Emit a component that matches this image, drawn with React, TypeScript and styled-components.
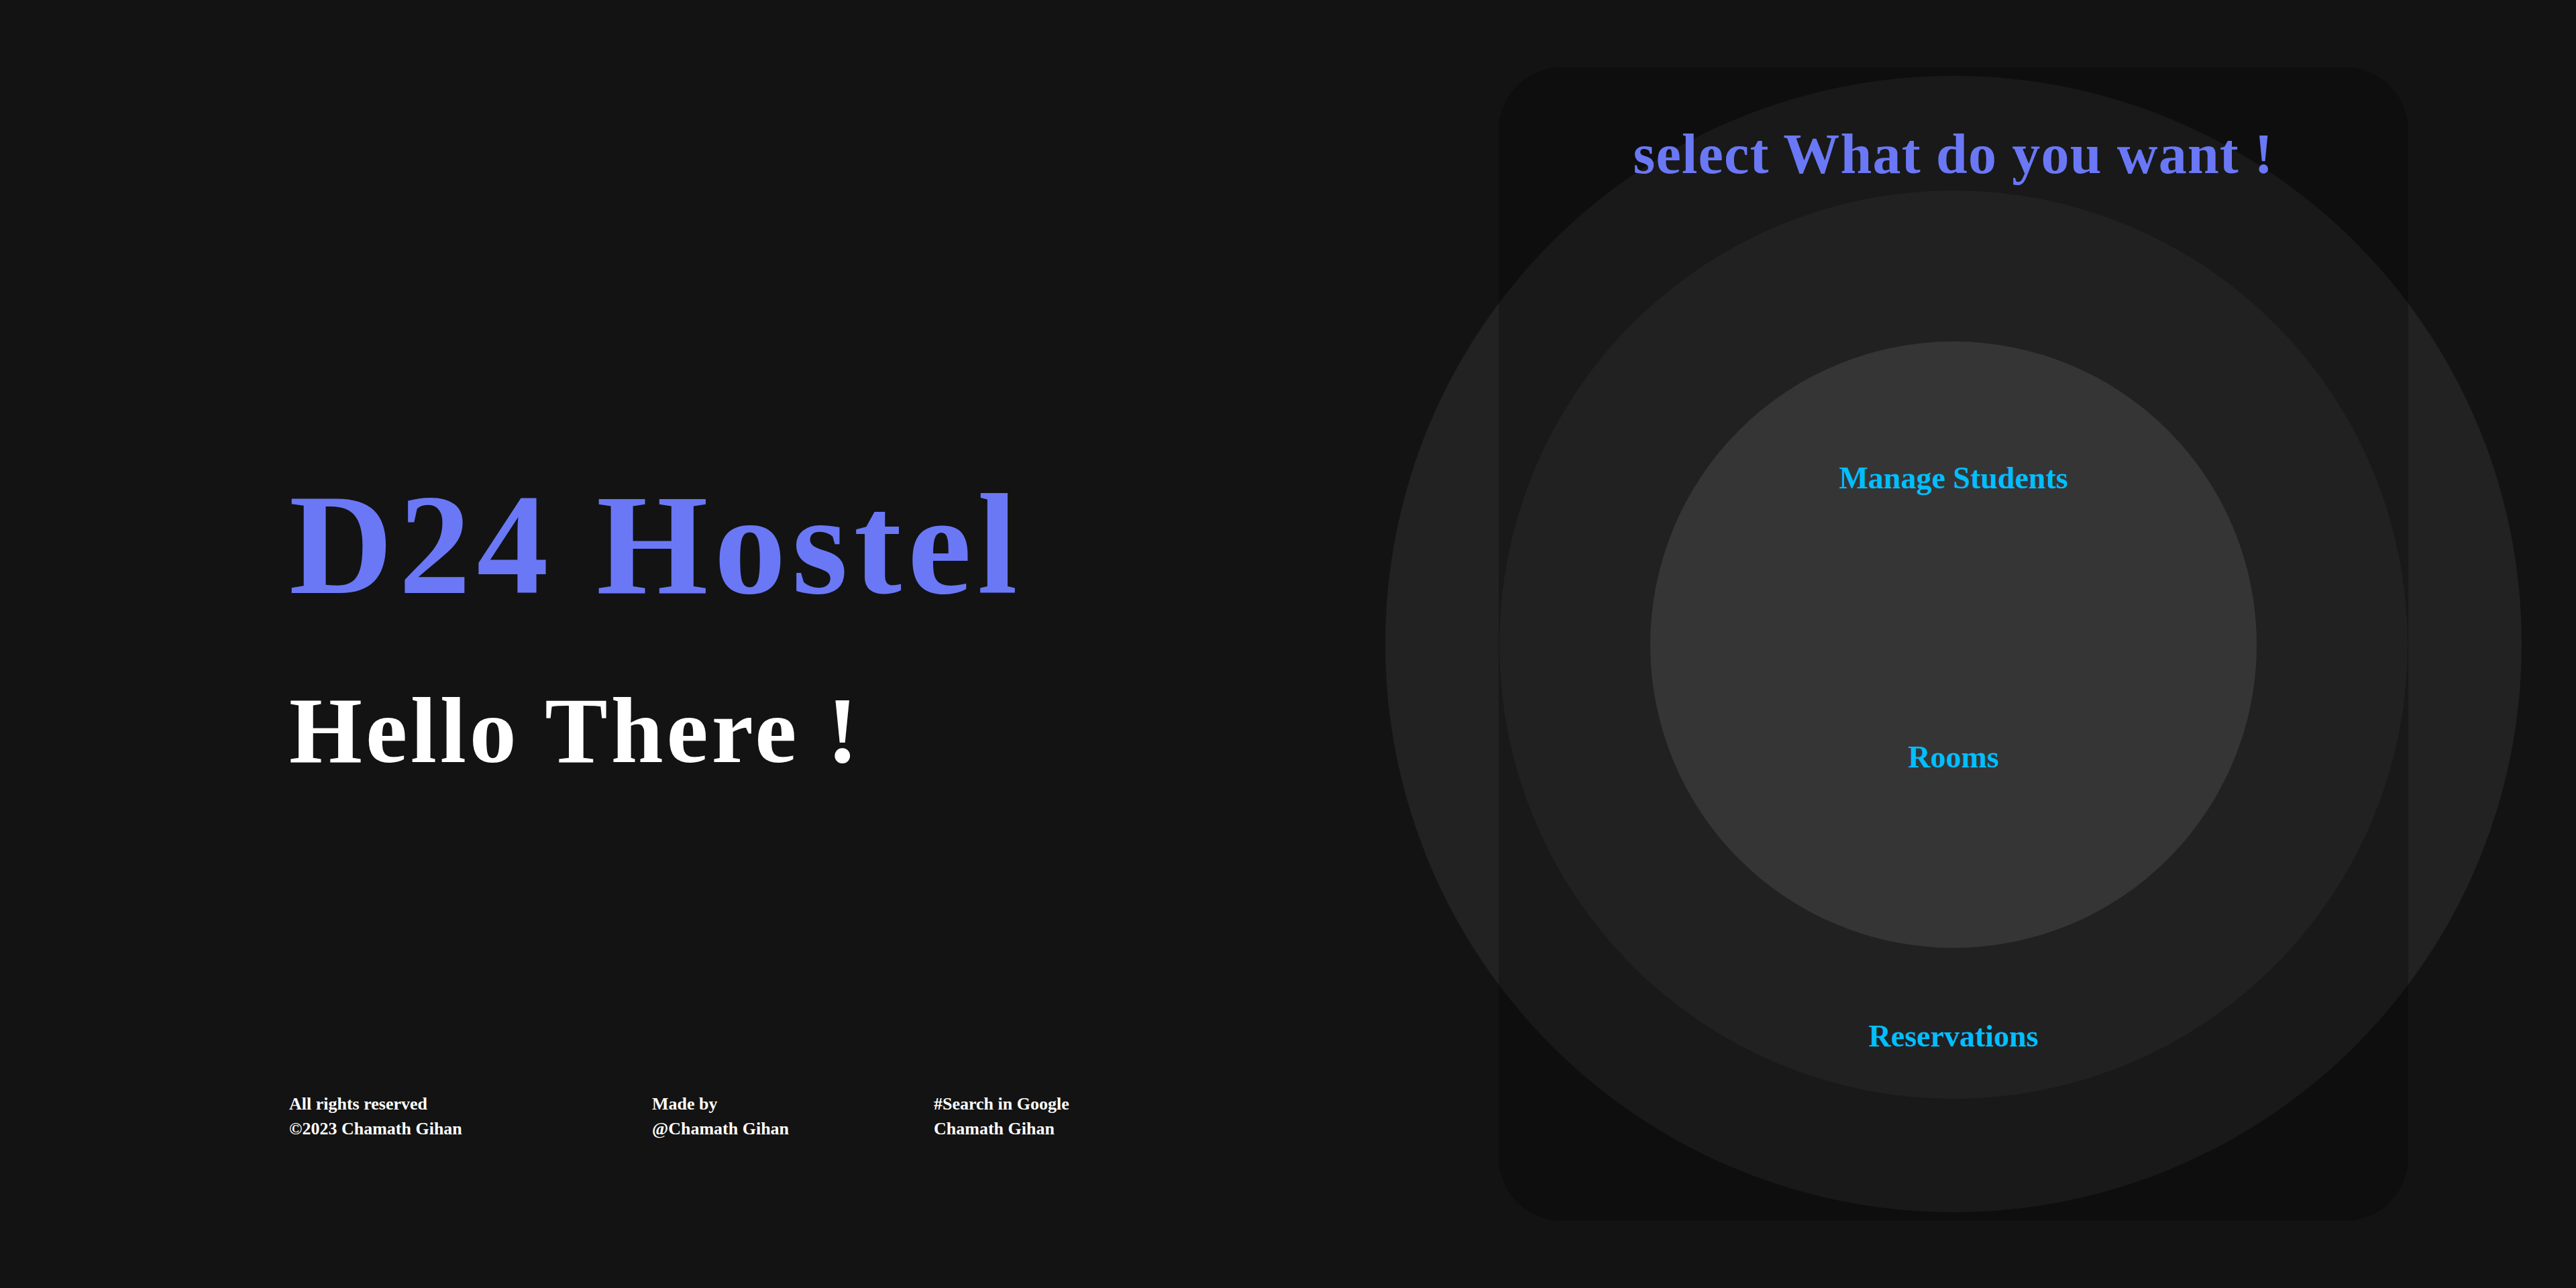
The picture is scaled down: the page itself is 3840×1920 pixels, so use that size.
import React from "react";
import styled, { createGlobalStyle } from "styled-components";

const GlobalStyle = createGlobalStyle`
  html, body {
    margin: 0;
    padding: 0;
    background: #131313;
  }
  body {
    font-family: "Liberation Serif", "Times New Roman", serif;
  }
  * { box-sizing: border-box; }
`;

const Page = styled.main`
  width: 3840px;
  height: 1920px;
  display: flex;
  align-items: center;
  background: #131313;
  overflow: hidden;
`;

const Intro = styled.section`
  flex: 1;
  align-self: stretch;
  display: flex;
  flex-direction: column;
  padding: 705px 0 0 431px;
`;

const Brand = styled.h1`
  margin: 0;
  font-size: 214px;
  line-height: 1;
  font-weight: 700;
  letter-spacing: 9px;
  color: #6a78f6;
  white-space: nowrap;
`;

const Greeting = styled.h2`
  margin: 100px 0 0;
  font-size: 140px;
  line-height: 1;
  font-weight: 700;
  letter-spacing: 5px;
  color: #ffffff;
  white-space: nowrap;
`;

const Footer = styled.footer`
  margin-top: 468px;
  display: grid;
  grid-template-columns: 541px 420px auto;
`;

const FooterBlock = styled.div`
  display: flex;
  flex-direction: column;
`;

const FooterLine = styled.span`
  font-size: 26px;
  line-height: 37px;
  font-weight: 700;
  color: #ffffff;
  white-space: nowrap;
`;

const Stage = styled.div`
  position: relative;
  width: 1356px;
  height: 1720px;
  margin-right: 250px;
  flex: none;
`;

const Halo = styled.div`
  position: absolute;
  left: 50%;
  top: 50%;
  width: 1694px;
  height: 1694px;
  transform: translate(-50%, -50%);
  border-radius: 50%;
  background: #222222;
`;

const Panel = styled.div`
  position: relative;
  width: 100%;
  height: 100%;
  border-radius: 94px;
  background: rgba(0, 0, 0, 0.24);
  display: flex;
  flex-direction: column;
  align-items: center;
  padding-top: 88px;
`;

const Disc = styled.div<{ $size: number; $tone: string }>`
  position: absolute;
  left: 50%;
  top: calc(50% + 1px);
  width: ${(p) => p.$size}px;
  height: ${(p) => p.$size}px;
  transform: translate(-50%, -50%);
  border-radius: 50%;
  background: ${(p) => p.$tone};
`;

const Prompt = styled.h3`
  position: relative;
  margin: 0;
  font-size: 84px;
  line-height: 1;
  font-weight: 700;
  letter-spacing: 1.2px;
  color: #6a78f6;
  white-space: nowrap;
`;

const Menu = styled.nav`
  position: relative;
  margin-top: 418px;
  display: flex;
  flex-direction: column;
  align-items: center;
  gap: 370px;
`;

const MenuItem = styled.a`
  font-size: 46px;
  line-height: 1;
  font-weight: 700;
  color: #00bfff;
  text-decoration: none;
  cursor: pointer;
  white-space: nowrap;
`;

export default function App() {
  return (
    <>
      <GlobalStyle />
      <Page>
        <Intro>
          <Brand>D24 Hostel</Brand>
          <Greeting>Hello There !</Greeting>
          <Footer>
            <FooterBlock>
              <FooterLine>All rights reserved</FooterLine>
              <FooterLine>©2023 Chamath Gihan</FooterLine>
            </FooterBlock>
            <FooterBlock>
              <FooterLine>Made by</FooterLine>
              <FooterLine>@Chamath Gihan</FooterLine>
            </FooterBlock>
            <FooterBlock>
              <FooterLine>#Search in Google</FooterLine>
              <FooterLine>Chamath Gihan</FooterLine>
            </FooterBlock>
          </Footer>
        </Intro>
        <Stage>
          <Halo />
          <Panel>
            <Disc $size={1354} $tone="#222122" />
            <Disc $size={904} $tone="#363536" />
            <Prompt>select What do you want !</Prompt>
            <Menu>
              <MenuItem>Manage Students</MenuItem>
              <MenuItem>Rooms</MenuItem>
              <MenuItem>Reservations</MenuItem>
            </Menu>
          </Panel>
        </Stage>
      </Page>
    </>
  );
}
